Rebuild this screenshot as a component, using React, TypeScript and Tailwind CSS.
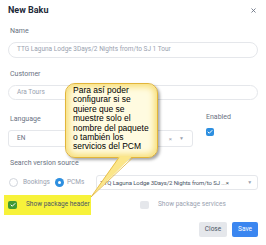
import { X, Check } from 'lucide-react';

const Label = ({ children, className = '' }: { children: React.ReactNode; className?: string }) => (
  <p className={`text-[7px] leading-[10px] text-gray-500 ${className}`}>{children}</p>
);

export default function App() {
  return (
    <div className="relative w-[266px] h-[245px] bg-white overflow-hidden font-['Roboto',sans-serif]">
      <div className="px-[8px] pt-[4px]">
        <div className="flex items-center justify-between h-[12px]">
          <h1 className="text-[9px] font-bold text-gray-800 leading-[12px]">New Baku</h1>
          <X className="w-[7px] h-[7px] text-gray-500 mr-[1px]" strokeWidth={3} />
        </div>

        <Label className="mt-[10px] ml-[2px]">Name</Label>
        <div className="mt-[6px] h-[16px] rounded-full border border-gray-200 flex items-center px-[8px] text-[6.5px] text-gray-400">
          TTG Laguna Lodge 3Days/2 Nights from/to SJ 1 Tour
        </div>

        <Label className="mt-[11px] ml-[2px]">Customer</Label>
        <div className="mt-[6px] h-[15px] rounded-full border border-gray-200 flex items-center px-[8px] text-[6.5px] text-gray-400">
          Ara Tours
        </div>

        <div className="flex mt-[12px]">
          <div className="w-[185px]">
            <Label className="mt-[2px] ml-[2px]">Language</Label>
            <div className="mt-[6px] h-[17px] rounded-[3px] border border-gray-200 flex items-center px-[8px] text-[6.5px] text-gray-500">
              <span className="flex-1">EN</span>
              <span className="text-gray-400 text-[6px]">×</span>
              <span className="text-gray-400 text-[5px] ml-[7px]">▼</span>
            </div>
          </div>
          <div className="ml-[13px]">
            <Label>Enabled</Label>
            <div className="mt-[6px] w-[8px] h-[8px] rounded-[2px] bg-[#2d8fe0] flex items-center justify-center">
              <Check className="w-[6px] h-[6px] text-white" strokeWidth={4} />
            </div>
          </div>
        </div>

        <Label className="mt-[11px] ml-[2px]">Search version source</Label>
        <div className="mt-[7px] h-[15px] flex items-center">
          <span className="shrink-0 w-[9px] h-[9px] rounded-full border border-gray-300 ml-[1px]" />
          <span className="shrink-0 ml-[5px] text-[6.5px] text-gray-400">Bookings</span>
          <span className="shrink-0 ml-[5px] w-[9px] h-[9px] rounded-full bg-[#2d8fe0] flex items-center justify-center">
            <span className="w-[3px] h-[3px] rounded-full bg-white" />
          </span>
          <span className="shrink-0 ml-[3px] text-[6.5px] text-gray-400">PCMs</span>
          <div className="ml-[12px] flex-1 min-w-0 h-[15px] rounded-[3px] border border-gray-200 flex items-center pl-[3px] pr-[5px] text-[6px] tracking-[-0.1px] text-gray-600 whitespace-nowrap">
            <span className="flex-1 min-w-0">TTQ Laguna Lodge 3Days/2 Nights from/to SJ ...×</span>
            <span className="shrink-0 text-gray-400 text-[5px] ml-[4px]">▼</span>
          </div>
        </div>

        <div className="mt-[5px] flex items-center h-[20px]">
          <div className="shrink-0 -ml-[4px] w-[87px] h-[20px] bg-[#f7f23a] flex items-center pl-[4px]">
            <div className="w-[9px] h-[8px] rounded-[2px] bg-[#3f9a35] flex items-center justify-center">
              <Check className="w-[6px] h-[6px] text-white" strokeWidth={4} />
            </div>
            <span className="ml-[9px] text-[6.5px] text-gray-600 whitespace-nowrap">Show package header</span>
          </div>
          <div className="shrink-0 ml-[49px] w-[9px] h-[8px] rounded-[2px] bg-gray-200" />
          <span className="ml-[9px] text-[6.5px] text-gray-400">Show package services</span>
        </div>

        <div className="mt-[7px] flex justify-end gap-[5px]">
          <button className="w-[28px] h-[15px] rounded-[2px] bg-gray-200 text-[6.5px] text-gray-600">Close</button>
          <button className="w-[26px] h-[15px] rounded-[2px] bg-[#3b86f0] text-[6.5px] text-white">Save</button>
        </div>
      </div>

      <div className="absolute left-[65px] top-[83px] w-[93px] h-[75px] rounded-[10px] border border-[#e2b53a] bg-[#fffbe0] shadow-[inset_0_0_6px_3px_#f8df7a,2px_2px_3px_rgba(0,0,0,0.35)] pl-[7px] pt-[2px] font-['Liberation_Sans',sans-serif] text-[8.5px] leading-[9.4px] text-black">
        Para así poder<br />
        configurar si se<br />
        quiere que se<br />
        muestre solo el<br />
        nombre del paquete<br />
        o también los<br />
        servicios del PCM
      </div>
      <svg className="absolute left-0 top-0 pointer-events-none" width="266" height="245">
        <polygon points="119.5,156 132.5,156 91,197" fill="#fbe68a" />
        <line x1="119" y1="157.5" x2="91" y2="197" stroke="#e2b53a" strokeWidth="0.8" />
        <line x1="133" y1="157.5" x2="91" y2="197" stroke="#e2b53a" strokeWidth="0.8" />
      </svg>
    </div>
  );
}
